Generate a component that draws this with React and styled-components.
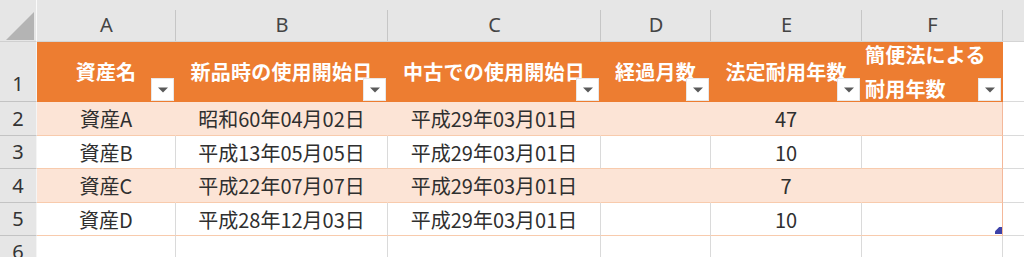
import React from "react";
import styled, { createGlobalStyle, css } from "styled-components";

const GlobalStyle = createGlobalStyle`
  html, body {
    margin: 0;
    padding: 0;
    background: #ffffff;
    overflow: hidden;
  }
  body {
    font-family: "Noto Sans CJK JP", "Noto Sans", sans-serif;
  }
`;

const ORANGE = "#ED7D31";
const BAND = "#FCE4D6";
const BAND_LINE = "#F8CBAD";
const EDGE = "#F4B89A";
const GRID = "#DADADA";
const HEAD_BG = "#E6E6E6";

const COLS = [37, 139, 212, 213, 110, 151, 141, 40];
const ROWS = [42, 60, 34, 33, 34, 33, 33];

const Sheet = styled.div`
  display: grid;
  grid-template-columns: ${COLS.map((c) => `${c}px`).join(" ")};
  grid-template-rows: ${ROWS.map((r) => `${r}px`).join(" ")};
  width: 1024px;
  height: 257px;
  overflow: hidden;
  background: #fff;
`;

const Corner = styled.div`
  background: ${HEAD_BG};
  border-right: 1px solid #fafafa;
  border-bottom: 1px solid #d0d0d0;
  box-sizing: border-box;
  display: flex;
  align-items: flex-end;
  justify-content: flex-end;
  padding: 0 1px 1px 0;
`;

const ColHead = styled.div`
  position: relative;
  background: ${HEAD_BG};
  box-sizing: border-box;
  border-bottom: 1px solid #d4d4d4;
  display: flex;
  align-items: center;
  justify-content: center;
  padding-top: 8px;
  font-family: "Noto Sans", "Noto Sans CJK JP", sans-serif;
  font-size: 20px;
  color: #444;

  &::after {
    content: "";
    position: absolute;
    right: 0;
    top: 10px;
    bottom: 0;
    width: 1px;
    background: #c6c6c6;
    box-shadow: 1px 0 0 #f7f7f7;
  }
`;

const RowHead = styled.div`
  background: ${HEAD_BG};
  box-sizing: border-box;
  border-right: 1px solid #f5f5f5;
  border-bottom: 1px solid #c3c3c3;
  display: flex;
  align-items: flex-end;
  justify-content: center;
  padding-bottom: ${(p) => (p.$tall ? 2 : 1)}px;
  font-family: "Noto Sans", "Noto Sans CJK JP", sans-serif;
  font-size: 20px;
  line-height: 30px;
  color: #333;
`;

const Cell = styled.div`
  position: relative;
  box-sizing: border-box;
  display: flex;
  align-items: center;
  justify-content: ${(p) => (p.$left ? "flex-start" : "center")};
  white-space: nowrap;
  font-size: 20px;
  color: #2f2f2f;
  background: #fff;
  border-right: 1px solid ${GRID};
  border-bottom: 1px solid ${GRID};

  ${(p) =>
    p.$kind === "head" &&
    css`
      background: ${ORANGE};
      color: #fff;
      font-weight: 700;
      border-right-color: ${ORANGE};
      border-bottom-color: ${ORANGE};
    `}

  ${(p) =>
    p.$kind === "band" &&
    css`
      background: ${BAND};
      border-right-color: ${BAND};
      border-bottom-color: ${BAND_LINE};
    `}

  ${(p) =>
    p.$kind === "plain" &&
    css`
      border-bottom-color: ${BAND_LINE};
    `}

  ${(p) =>
    p.$edge &&
    p.$kind !== "head" &&
    css`
      border-right-color: ${EDGE};
    `}
`;

const HeadText = styled.span`
  display: block;
  white-space: ${(p) => (p.$wrap ? "normal" : "nowrap")};
  line-height: 34px;
  padding: ${(p) => (p.$wrap ? "0 4px 0 3px" : "0")};
  width: ${(p) => (p.$wrap ? "100%" : "auto")};
  box-sizing: border-box;
  letter-spacing: 0.2px;
`;

const FilterButton = styled.div`
  position: absolute;
  right: 1px;
  bottom: 0;
  width: 23px;
  height: 23px;
  box-sizing: border-box;
  background: #fff;
  border: 1px solid #e8e8e8;
  display: flex;
  align-items: center;
  justify-content: center;
`;

const ResizeHandle = styled.div`
  position: absolute;
  right: 0;
  bottom: 1px;
  width: 7px;
  height: 7px;
  background: #3c41a8;
  clip-path: polygon(100% 0, 100% 100%, 0 100%, 0 60%, 60% 0);
`;

const FilterArrow = () => (
  <svg width="10" height="6" viewBox="0 0 10 6">
    <path d="M0 0.5 L10 0.5 L5 5.5 Z" fill="#5a5a5a" />
  </svg>
);

const CornerMark = () => (
  <svg width="29" height="28" viewBox="0 0 29 28">
    <path d="M0 28 L28 28 L28 0 Z" fill="#b4b4b4" />
  </svg>
);

const letters = ["A", "B", "C", "D", "E", "F", ""];

const headers = [
  "資産名",
  "新品時の使用開始日",
  "中古での使用開始日",
  "経過月数",
  "法定耐用年数",
  "簡便法による耐用年数",
];

const data = [
  ["資産A", "昭和60年04月02日", "平成29年03月01日", "", "47", ""],
  ["資産B", "平成13年05月05日", "平成29年03月01日", "", "10", ""],
  ["資産C", "平成22年07月07日", "平成29年03月01日", "", "7", ""],
  ["資産D", "平成28年12月03日", "平成29年03月01日", "", "10", ""],
];

export default function App() {
  return (
    <>
      <GlobalStyle />
      <Sheet>
        <Corner>
          <CornerMark />
        </Corner>
        {letters.map((l, i) => (
          <ColHead key={`c${i}`}>{l}</ColHead>
        ))}

        <RowHead $tall>1</RowHead>
        {headers.map((h, i) => {
          const wrap = i === headers.length - 1;
          return (
            <Cell key={`h${i}`} $kind="head" $left={wrap} $edge={wrap}>
              <HeadText $wrap={wrap}>{h}</HeadText>
              <FilterButton>
                <FilterArrow />
              </FilterButton>
            </Cell>
          );
        })}
        <Cell />

        {data.map((row, r) => {
          const kind = r % 2 === 0 ? "band" : "plain";
          return (
            <React.Fragment key={`r${r}`}>
              <RowHead>{r + 2}</RowHead>
              {row.map((v, c) => (
                <Cell key={c} $kind={kind} $edge={c === row.length - 1}>
                  {v}
                  {r === data.length - 1 && c === row.length - 1 && <ResizeHandle />}
                </Cell>
              ))}
              <Cell />
            </React.Fragment>
          );
        })}

        <RowHead>6</RowHead>
        {letters.map((_, i) => (
          <Cell key={`e${i}`} />
        ))}
      </Sheet>
    </>
  );
}
